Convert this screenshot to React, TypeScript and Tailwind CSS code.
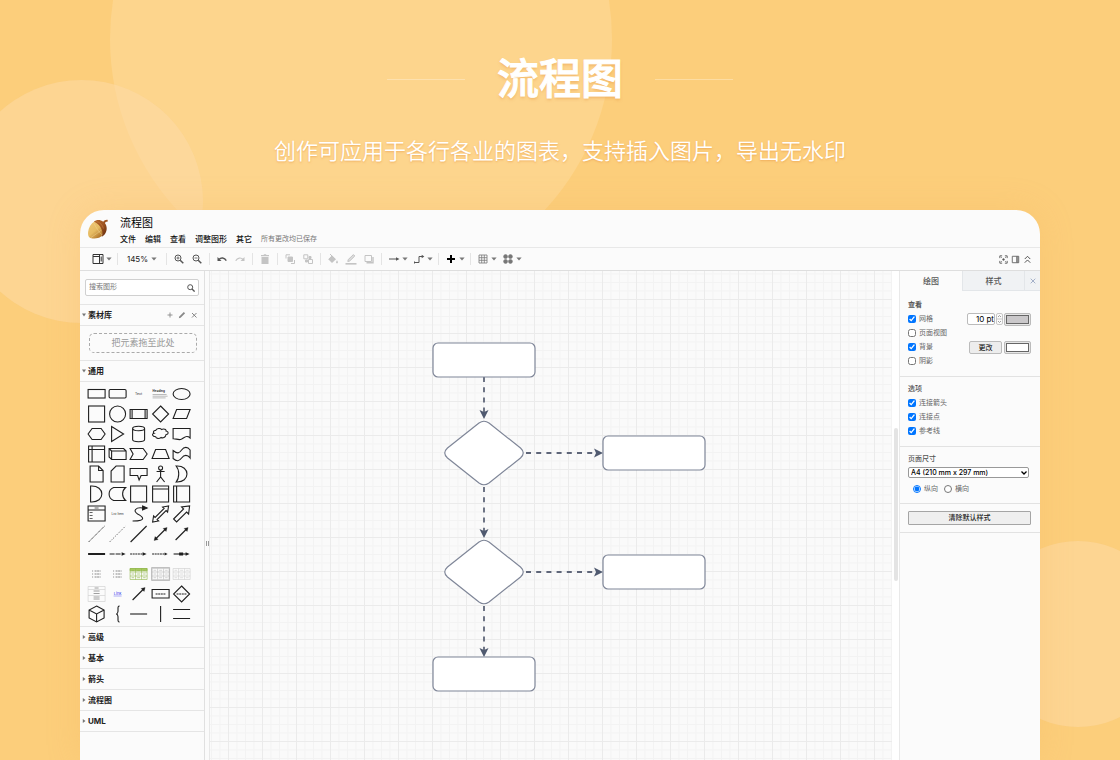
import type { ReactNode } from "react";

const INK = "#1f1f1f";
const MUTED = "#c4c4c4";
const STROKE = "#7f8698";
const EDGE = "#5f6679";

function Caret() {
  return (
    <svg viewBox="0 0 6 4" className="h-1 w-[6px] shrink-0" aria-hidden="true">
      <path d="M.4.5h5.2L3 3.5z" fill="#777" />
    </svg>
  );
}

interface ToolProps {
  readonly label: string;
  readonly children: ReactNode;
  readonly caret?: boolean;
  readonly color?: string;
}

function Tool({ label, children, caret, color = "#555" }: ToolProps) {
  return (
    <button
      type="button"
      aria-label={label}
      className={
        caret
          ? "flex h-4 w-[25px] items-center justify-center gap-[2px]"
          : "flex h-4 w-[18px] items-center justify-center"
      }
    >
      <svg
        viewBox="0 0 12 12"
        className="size-3 shrink-0"
        fill="none"
        stroke={color}
        aria-hidden="true"
      >
        {children}
      </svg>
      {caret && <Caret />}
    </button>
  );
}

function Divider() {
  return <span className="mx-[3px] h-3 w-px bg-[#e4e4e4]" />;
}

function Logo() {
  return (
    <svg viewBox="0 0 22 22" className="size-[22px]" aria-hidden="true">
      <defs>
        <linearGradient id="nut" x1="0" y1="0" x2=".8" y2="1">
          <stop offset="0" stopColor="#efc878" />
          <stop offset=".55" stopColor="#e6bb62" />
          <stop offset="1" stopColor="#a8691f" />
        </linearGradient>
        <linearGradient id="cap" x1="0" y1="0" x2="1" y2="1">
          <stop offset="0" stopColor="#b5692c" />
          <stop offset=".5" stopColor="#9c5220" />
          <stop offset="1" stopColor="#5a2509" />
        </linearGradient>
      </defs>
      <path
        d="M7.500 3.500C4 5.500 1.600 9.500 1.100 14c-.3 3 .4 5.400 2.400 5.900 3 .9 7.500.9 10.500-1.400 2.500-2 3-6 1-9.500-1.700-3-4.500-5-7.500-5.500z"
        fill="url(#nut)"
      />
      <path d="M7 5.500c2 4 4.500 8 8 11.500M14.500 12C11 14.500 7.500 17.500 4 19.500" stroke="#f6dc9a" strokeWidth=".6" fill="none" opacity=".7" />
      <path
        d="M6.800 3.600c2.700-2.100 6.600-2.100 9.400.2.900-1.400 2.500-2.200 4.300-2l.4 1.800c-1.300 0-2.400.5-3 1.500 2.300 3.200 2.500 7.400.2 10.700-.9 1.300-2.100 2.400-3.500 2.900 1.200-2.500 1.100-4.800-.1-7.500C13.200 8 10.600 5.300 6.800 3.600z"
        fill="url(#cap)"
      />
      <path d="M9.500 3.500c3.500.8 6 3.500 7 7" stroke="#d08a4a" strokeWidth=".7" fill="none" opacity=".7" />
    </svg>
  );
}

function Header() {
  return (
    <header className="flex h-[38px] shrink-0 border-b border-[#e8e8e8] pl-[7px]">
      <div className="pt-2">
        <Logo />
      </div>
      <div className="pt-[6px] pl-[11px]">
        <h2 className="text-[11px] leading-[14px] text-black">流程图</h2>
        <nav className="mt-[3px] flex items-center gap-[9px] text-[8px] leading-3 font-medium text-[#111]">
          {["文件", "编辑", "查看", "调整图形", "其它"].map((item) => (
            <button key={item} type="button">
              {item}
            </button>
          ))}
          <span className="text-[7px] font-normal text-[#777]">所有更改均已保存</span>
        </nav>
      </div>
    </header>
  );
}

function Toolbar() {
  return (
    <div className="flex h-[23px] shrink-0 items-center border-b border-[#dedede] pr-[7px] pl-[9px]">
      <Tool label="视图" caret color="#333">
        <path d="M1 1.500h10v9H1zM1 3.500h6.500M7.500 1.500v9M9.200 3.500v5" />
      </Tool>
      <Divider />
      <button
        type="button"
        className="flex w-[42px] items-center justify-center gap-[3px] text-[8px] text-[#222]"
      >
        145%
        <Caret />
      </button>
      <Divider />
      <Tool label="放大">
        <circle cx="5" cy="5" r="3" />
        <path d="M7.200 7.200 10.300 10.300" strokeWidth="1.500" />
        <path d="M3.500 5h3M5 3.500v3" strokeWidth=".8" />
      </Tool>
      <Tool label="缩小">
        <circle cx="5" cy="5" r="3" />
        <path d="M7.200 7.200 10.300 10.300" strokeWidth="1.500" />
        <path d="M3.500 5h3" strokeWidth=".8" />
      </Tool>
      <Divider />
      <Tool label="撤销">
        <path d="M3 6.500c2-2.300 5.500-2 7.300 1.200" strokeWidth="1.400" />
        <path d="M1.500 4v4h4z" fill="#555" stroke="none" />
      </Tool>
      <Tool label="重做" color={MUTED}>
        <path d="M9 6.500c-2-2.300-5.500-2-7.300 1.200" strokeWidth="1.200" />
        <path d="M10.500 4v4h-4z" fill={MUTED} stroke="none" />
      </Tool>
      <Divider />
      <Tool label="删除" color={MUTED}>
        <path d="M2.500 4h7v7h-7zM2 2h2.500l.6-.8h1.800l.6.8H10v1.200H2z" fill={MUTED} stroke="none" />
      </Tool>
      <Divider />
      <Tool label="移至最前" color={MUTED}>
        <path d="M4 4h4.500v4.500H4z" fill={MUTED} />
        <path d="M2 5.500V1.800h4M7 10.500h3.500V7" />
      </Tool>
      <Tool label="移至最后" color={MUTED}>
        <path d="M1.800 1.800h4v4h-4zM6.500 6.500h4v4h-4z" />
        <path d="M7 3.500h2v2h-2zM3.500 7h2v2h-2z" fill={MUTED} />
      </Tool>
      <Divider />
      <Tool label="填充颜色" color={MUTED}>
        <path d="m5 2.500 4 3.800L5 10 1.300 6.300z" fill={MUTED} stroke="none" />
        <path d="m3 1 3 3M2 6.300 5 3.200l3 3" />
        <path d="M10 7.200c1.600 2.200.9 3.100 0 3.100s-1.600-.9 0-3.100z" fill={MUTED} stroke="none" />
      </Tool>
      <Tool label="线条颜色" color={MUTED}>
        <path d="M.5 10.800h11" strokeWidth="1.600" />
        <path d="m2.800 8.500.4-1.900 5.200-5 1.400 1.400-5.100 5z" fill="#ddd" />
      </Tool>
      <Tool label="阴影" color={MUTED}>
        <path d="M2 2.500h6.500v6H2z" />
        <path d="M3.500 9.700h6.500V4" strokeWidth="1.400" />
      </Tool>
      <Divider />
      <Tool label="连接" caret>
        <path d="M1 6h7.500" />
        <path d="M8 4.200 11.500 6 8 7.800z" fill="#555" stroke="none" />
      </Tool>
      <Tool label="路径点" caret>
        <path d="M2 9.500h4v-6h3.500M1.500 8.500v2" />
        <path d="m8.700 1.700 2.600 1.800-2.600 1.800z" fill="#555" stroke="none" />
      </Tool>
      <Divider />
      <Tool label="插入" caret color="#000">
        <path d="M2 6h8M6 2v8" strokeWidth="2" />
      </Tool>
      <Divider />
      <Tool label="表格" caret color="#777">
        <path d="M2 2h8v8H2zM2 4.700h8M2 7.300h8M4.700 2v8M7.300 2v8" strokeWidth=".8" />
      </Tool>
      <Tool label="形状" caret color="#777">
        <rect x="1.800" y="1.800" width="3.500" height="3.500" rx="1.500" fill="#777" />
        <rect x="6.700" y="1.800" width="3.500" height="3.500" rx="1.500" fill="#777" />
        <rect x="1.800" y="6.700" width="3.500" height="3.500" rx="1.500" fill="#777" />
        <rect x="6.700" y="6.700" width="3.500" height="3.500" rx="1.500" fill="#777" />
      </Tool>
      <div className="ml-auto flex">
        <button type="button" aria-label="全屏" className="w-3">
          <svg viewBox="0 0 12 12" className="size-[11px]" fill="none" stroke="#555">
            <path d="M2 4.500V2h2.500M7.500 2H10v2.500M10 7.500V10H7.500M4.500 10H2V7.500" />
            <path d="m3.500 3.500 1 1M8.500 3.500l-1 1M3.500 8.500l1-1M8.500 8.500l-1-1" strokeWidth=".8" />
            <circle cx="6" cy="6" r=".8" fill="#555" />
          </svg>
        </button>
        <button type="button" aria-label="格式" className="w-3">
          <svg viewBox="0 0 12 12" className="size-[11px]" fill="none" stroke="#666">
            <path d="M2.500 2.500h7v7h-7zM7.300 2.500v7M8.500 2.500v7" />
          </svg>
        </button>
        <button type="button" aria-label="收起" className="w-[11px]">
          <svg viewBox="0 0 12 12" className="size-[11px]" fill="none" stroke="#444">
            <path d="m3 5.500 3-3 3 3M3 9.500l3-3 3 3" />
          </svg>
        </button>
      </div>
    </div>
  );
}

function TinyTable({ line, head }: { readonly line: string; readonly head?: string }) {
  return (
    <g stroke={line} strokeWidth=".6">
      {head && <path d="M-8.500-5.500h17v2.200h-17z" fill={head} />}
      <path d="M-8.500-5.500h17v11h-17zM-8.500-2h17M-8.500 2h17M-3-5.500v11M3-5.500v11" />
      <path d="M-7-3.700h2.500M-1.500-3.700h3M4.500-3.700h2.500M-7 0h2.500M-1.500 0h3M4.500 0h2.500M-7 3.700h2.500M-1.500 3.700h3M4.500 3.700h2.500" />
    </g>
  );
}

function TinyText({ children, bold, y = 1, size = 3.5, fill = "#333" }: {
  readonly children: string;
  readonly bold?: boolean;
  readonly y?: number;
  readonly size?: number;
  readonly fill?: string;
}) {
  return (
    <text x="0" y={y} fontSize={size} fontWeight={bold ? 700 : 400} textAnchor="middle" fill={fill} stroke="none">
      {children}
    </text>
  );
}

const list = (
  <path
    d="M-4.500-3h1M-2-3h6M-4.500 0h1M-2 0h6M-4.500 3h1M-2 3h6"
    stroke="#888"
    strokeWidth="1"
    strokeDasharray="2 .5"
  />
);

// drawn around the centre of a 20 x 20 cell
const SHAPES: readonly ReactNode[] = [
  <rect x="-8.500" y="-4.500" width="17" height="8.500" />,
  <rect x="-8.500" y="-4.500" width="17" height="8.500" rx="1.200" />,
  <TinyText>Text</TinyText>,
  <>
    <text x="-8" y="-2" fontSize="3" fontWeight="700" fill="#333" stroke="none">Heading</text>
    <path d="M-8 .5H6M-8 2.200H7M-8 3.900H5" stroke="#aaa" strokeWidth=".8" />
  </>,
  <ellipse rx="8.500" ry="5.500" />,
  <rect x="-8" y="-8" width="16" height="16" />,
  <circle r="8" />,
  <path d="M-8.500-4.500h17v9h-17zM-6.500-4.500v9M6.500-4.500v9" />,
  <path d="m0-8 8 8-8 8-8-8z" />,
  <path d="M-5-4.500H8.500L5 4.500H-8.500z" />,
  <path d="M-4.500-5.500h9L8.500 0l-4 5.500h-9L-8.500 0z" />,
  <path d="M-6-7.500 6 0-6 7.500z" />,
  <path d="M-6-5.500v11c0 3 12 3 12 0v-11c0-3-12-3-12 0 0 3 12 3 12 0" />,
  <path d="M-5-3.500c1-2.500 5-2.500 6-1 2-1 5 0 4.500 1.500 3 .8 2.500 3.200 0 3.500C5 3.500 2 4.500.5 3.500c-2 1.500-5 1.200-5.500-.8-3.500 0-4-3-1.500-3.400C-8-1.500-7-3.800-5-3.500z" />,
  <path d="M-8.500-5.500h17V4C4 0 2 5-1 5.500c-3 .5-5-1-7.500-.8z" />,
  <path d="M-8-8H8V8H-8zM-8-4.500H8M-4.500-8V8" />,
  <path d="M-8.500-5.500H6L8.500-3v8.500H-6L-8.500 3zM-8.500-5.500-6-3M-6 5.500V-3H8.500" />,
  <path d="M-8.500-5.500h13L8.500 0l-4 5.500h-13L-5.500 0z" />,
  <path d="M-5-4.500H5l3.500 9h-17z" />,
  <path d="M-8.500-3.500C-4 0-2.500-.5 0-4c2.500-3.500 6-3.500 8.500 0v8C6 .5 2.500.5 0 4c-2.500 3.500-5 3.500-8.500.5z" />,
  <path d="M-6.500-8H2l4.500 4.500V8h-13zM2-8v4.500h4.500" />,
  <path d="M-1.500-8h8V8h-13V-3z" />,
  <path d="M-8.500-5.500h17v7H2.500L.5 6-1 1.500h-7.500z" />,
  <>
    <circle cy="-6" r="2" />
    <path d="M0-4v7M-4-2.500h8M-4 8l4-5 4 5" />
  </>,
  <path d="M-5.500-8C9-9 9 9-5.500 8-2 4-2-4-5.500-8z" />,
  <path d="M-6-8C9-9 9 9-6 8z" />,
  <path d="M-4-6.500h12C4-3 4 3 8 6.500H-4C-10 4-10-4-4-6.500z" />,
  <rect x="-8" y="-8" width="16" height="16" />,
  <path d="M-8-8H8V8H-8zM-8-5H8" />,
  <path d="M-8-8H8V8H-8zM-5-8V8" />,
  <>
    <path d="M-8.500-8h17V7h-17zM-8.500-4h17" />
    <path d="M-2-6h4M-7-1.500h3M-7 1.500h3M-7 4.500h3" strokeWidth=".7" />
  </>,
  <TinyText size={3}>List Item</TinyText>,
  <>
    <path d="M-6 7C10 7 3 2-1 0c-5-3-2-7 5-6" />
    <path d="m4-8 4.500 2L4-4z" fill={INK} />
  </>,
  <path d="m-8 8 1-6 1.500 1.500L3.500-5.500 2-7l6-1-1 6-1.500-1.500-9 9L-2 7z" />,
  <path d="m-8 5 10-10-2-2 8-1-1 8-2-2L-5 8z" />,
  <path d="M-8 8 8-8" strokeDasharray="1.500 .5" strokeWidth=".8" />,
  <path d="M-8 8 8-8" strokeDasharray="1 1.500" strokeWidth=".8" />,
  <path d="M-8 8 8-8" />,
  <>
    <path d="M-5.500 5.500 5.500-5.500" />
    <path d="m-6.500 6.500 1-4 3 3zM6.500-6.500l-4 1 3 3z" fill={INK} strokeWidth=".3" />
  </>,
  <>
    <path d="M-6 6 5.500-5.500" />
    <path d="m6.500-6.500-4 1 3 3z" fill={INK} strokeWidth=".3" />
  </>,
  <path d="M-8.500 0h17" strokeWidth="2" />,
  <>
    <path d="M-8 0h12" strokeDasharray="5 1" />
    <path d="M4-1.800 8 0 4 1.800z" fill={INK} stroke="none" />
  </>,
  <>
    <path d="M-8.500 0H5" strokeDasharray="2 .6" />
    <path d="M4-1.800 8 0 4 1.800z" fill={INK} stroke="none" />
  </>,
  <>
    <path d="M-8.500 0H5" strokeDasharray="2 .6" />
    <path d="M4-1.500 7 0 4 1.500z" fill={INK} stroke="none" />
  </>,
  <>
    <path d="M-8 0H5" />
    <path d="M-2.500-1.500h4v3h-4zM4-1.800 8 0 4 1.800z" fill={INK} stroke="none" />
  </>,
  list,
  list,
  <TinyTable line="#8fb548" head="#a9cc61" />,
  <g>
    <TinyTable line="#bbb" />
    <path d="M-9-6.500H9v13H-9z" stroke="#999" strokeWidth=".6" />
  </g>,
  <TinyTable line="#ccc" />,
  <g stroke="#ccc" strokeWidth=".6">
    <path d="M-8.500-7.500h17v15h-17zM-8.500-4.500h17M-8.500 1.500h17" />
    <path d="M-2-6h4M-3-3h6M-3-.5h6M-3 3h6M-3 5h6" stroke="#888" strokeWidth=".8" />
  </g>,
  <g>
    <TinyText fill="#33e" size={4}>Link</TinyText>
    <path d="M-4 2h8" stroke="#33e" strokeWidth=".4" />
  </g>,
  <>
    <path d="M-6 6 5.500-5.500" />
    <path d="m6.500-6.500-4 1 3 3z" fill={INK} strokeWidth=".3" />
  </>,
  <>
    <path d="M-8.500-4.500h17v8.500h-17z" />
    <path d="M-5 0H5" strokeDasharray="2 .6" strokeWidth="1.200" />
  </>,
  <>
    <path d="m0-8 8 8-8 8-8-8z" />
    <path d="M-5 0H5" strokeDasharray="2 .6" strokeWidth="1" />
  </>,
  <path d="m0-8 7.500 4v8L0 8l-7.500-4v-8zM-7.500-4 0 0l7.500-4M0 0v8" />,
  <path d="M2-8C-.5-8 .8-5 .3-2 0-.5-.5 0-1.500 0-.5 0 0 .5.300 2 .8 5-.5 8 2 8" />,
  <path d="M-8.500 0h17" />,
  <path d="M0-8V8" />,
  <path d="M-8.500-4.500h17M-8.500 4.500h17" />,
];

function SectionHead({ title, open, children }: {
  readonly title: string;
  readonly open?: boolean;
  readonly children?: ReactNode;
}) {
  return (
    <div className="flex h-[21px] items-center border-t border-[#e5e5e5] pr-[6px] pl-[2px]">
      <button type="button" className="flex items-center gap-[2px] text-[8px] font-bold text-[#222]">
        <svg viewBox="0 0 4 4" className="size-1" aria-hidden="true">
          <path d={open ? "M0 .5h4L2 3.500z" : "M.8 0 3.500 2 .8 4z"} fill="#777" />
        </svg>
        {title}
      </button>
      {children}
    </div>
  );
}

function Sidebar() {
  return (
    <aside className="w-[125px] shrink-0 border-r border-[#e0e0e0]">
      <div className="px-[5px] py-2">
        <div className="flex h-[17px] items-center rounded-[2px] border border-[#d0d0d0] bg-white px-[3px]">
          <input
            aria-label="搜索图形"
            placeholder="搜索图形"
            className="min-w-0 flex-1 text-[7px] outline-none placeholder:text-[#777]"
          />
          <svg viewBox="0 0 8 8" className="size-2" fill="none" stroke="#555" aria-hidden="true">
            <circle cx="3.200" cy="3.200" r="2.500" />
            <path d="m5 5 2.600 2.600" strokeWidth="1.300" />
          </svg>
        </div>
      </div>
      <SectionHead title="素材库" open>
        <div className="ml-auto flex gap-1">
          <button type="button" aria-label="添加">
            <svg viewBox="0 0 8 8" className="size-2" stroke="#888" strokeWidth=".9">
              <path d="M1.500 4h5M4 1.500v5" />
            </svg>
          </button>
          <button type="button" aria-label="编辑素材库">
            <svg viewBox="0 0 8 8" className="size-2" fill="#888">
              <path d="m.8 7.200.5-1.800L5.800.9l1.300 1.300-4.500 4.500z" />
            </svg>
          </button>
          <button type="button" aria-label="关闭素材库">
            <svg viewBox="0 0 8 8" className="size-2" stroke="#777" strokeWidth=".9">
              <path d="m2 2 4.500 4.500M6.500 2 2 6.500" />
            </svg>
          </button>
        </div>
      </SectionHead>
      <div className="border-t border-[#e5e5e5] pt-[7px] pr-[7px] pb-[7px] pl-[9px]">
        <div className="flex h-5 items-center justify-center rounded-[5px] border border-dashed border-[#aaa] text-[9px] text-[#999]">
          把元素拖至此处
        </div>
      </div>
      <SectionHead title="通用" open />
      <div className="border-t border-[#e5e5e5] px-[6px] py-[2px]">
        <div className="grid w-[106px] grid-cols-5">
          {SHAPES.map((shape, index) => (
            <svg
              key={index}
              viewBox="-10 -10 20 20"
              className="h-5 w-full overflow-visible"
              fill="none"
              stroke={INK}
              strokeWidth="1.100"
              aria-hidden="true"
            >
              {shape}
            </svg>
          ))}
        </div>
      </div>
      {["高级", "基本", "箭头", "流程图", "UML"].map((title) => (
        <SectionHead key={title} title={title} />
      ))}
      <div className="border-t border-[#e5e5e5]" />
    </aside>
  );
}

function Box({ x, y }: { readonly x: number; readonly y: number }) {
  return <rect x={x} y={y} width="102" height="34" rx="5" fill="#fff" stroke={STROKE} strokeWidth="1.200" />;
}

function Decision({ y }: { readonly y: number }) {
  return (
    <path
      transform={`translate(274 ${y})`}
      d="M-5-30Q0-33.500 5-30L36.500-5Q42 0 36.500 5L5 30Q0 33.500-5 30L-36.500 5Q-42 0-36.500-5z"
      fill="#fff"
      stroke={STROKE}
      strokeWidth="1.200"
    />
  );
}

function Connector({ x, y, length, down }: {
  readonly x: number;
  readonly y: number;
  readonly length: number;
  readonly down?: boolean;
}) {
  return (
    <g transform={`translate(${x} ${y}) rotate(${down ? 90 : 0})`}>
      <path d={`M0 0H${length - 6}`} stroke={EDGE} strokeWidth="1.800" strokeDasharray="5 5.200" />
      <path transform={`translate(${length} 0)`} d="M0 0-9-4.500-7 0-9 4.500z" fill="#505a70" />
    </g>
  );
}

function Canvas() {
  return (
    <main className="min-w-0 flex-1 bg-[#fafafa]">
      <svg className="block h-full w-full" role="img" aria-label="流程图画布">
        <defs>
          <pattern id="grid" x="18" y="28" width="34" height="34" patternUnits="userSpaceOnUse">
            <path
              d="M9 0v34M17.500 0v34M26 0v34M0 9h34M0 17.500h34M0 26h34"
              stroke="#f3f3f3"
              fill="none"
            />
            <path d="M.5 0v34M0 .5h34" stroke="#ebebeb" fill="none" />
          </pattern>
        </defs>
        <rect width="100%" height="100%" fill="url(#grid)" />
        <Connector x={274} y={106} length={42} down />
        <Connector x={274} y={216} length={51} down />
        <Connector x={274} y={335} length={51} down />
        <Connector x={316} y={182} length={77} />
        <Connector x={316} y={301} length={77} />
        <Box x={223} y={72} />
        <Decision y={182} />
        <Box x={393} y={165} />
        <Decision y={301} />
        <Box x={393} y={284} />
        <Box x={223} y={386} />
      </svg>
    </main>
  );
}

function Check({ label, checked }: { readonly label: string; readonly checked?: boolean }) {
  return (
    <label className="flex h-[14px] items-center gap-[3px] text-[7px] text-[#666]">
      <input type="checkbox" defaultChecked={checked} className="size-2" />
      {label}
    </label>
  );
}

function Swatch({ label, dark }: { readonly label: string; readonly dark?: boolean }) {
  return (
    <button
      type="button"
      aria-label={label}
      className="h-[13px] w-[27px] rounded-[2px] border border-[#bbb] bg-[#e6e6e6] p-px"
    >
      <span
        className={
          dark
            ? "block h-full border border-[#666] bg-[#cac8ca]"
            : "block h-full border border-[#666] bg-white"
        }
      />
    </button>
  );
}

function FormatPanel() {
  return (
    <aside className="w-[140px] shrink-0 text-[7px] text-[#555]">
      <div className="flex h-5 font-medium">
        <button type="button" className="w-[62px] text-[8px]">
          绘图
        </button>
        <button type="button" className="flex-1 border-b border-l border-[#e3e6e9] bg-[#f0f2f4] text-[8px]">
          样式
        </button>
        <button
          type="button"
          aria-label="关闭"
          className="flex w-4 items-center justify-center border-b border-l border-[#e3e6e9] bg-[#f0f2f4]"
        >
          <svg viewBox="0 0 6 6" className="size-[6px]" stroke="#a3b0c8">
            <path d="m.7.7 4.600 4.600M5.300.7.7 5.300" />
          </svg>
        </button>
      </div>
      <section className="border-b border-[#e2e2e2] pt-[6px] pr-[9px] pb-2 pl-2">
        <h3 className="h-[15px] leading-[15px] font-bold">查看</h3>
        <div className="flex justify-between">
          <Check label="网格" checked />
          <div className="flex items-center gap-px">
            <input
              aria-label="网格大小"
              defaultValue="10 pt"
              className="h-3 w-[28px] rounded-[2px] border border-[#bbb] bg-white text-right text-[8px] text-black"
            />
            <button type="button" aria-label="调整网格大小" className="w-[7px]">
              <svg viewBox="0 0 7 12" className="h-3 w-[7px]" fill="none" stroke="#888" strokeWidth=".8">
                <rect x=".5" y=".5" width="6" height="11" rx="1.500" stroke="#bbb" />
                <path d="M.5 6h6" stroke="#bbb" />
                <path d="M2 4l1.500-1.500L5 4M2 8l1.500 1.500L5 8" />
              </svg>
            </button>
            <Swatch label="网格颜色" dark />
          </div>
        </div>
        <Check label="页面视图" />
        <div className="flex justify-between">
          <Check label="背景" checked />
          <div className="flex items-center gap-[2px]">
            <button
              type="button"
              className="h-[13px] w-[33px] rounded-[2px] border border-[#bbb] bg-[#ededed] text-[7px] leading-[11px] text-black"
            >
              更改
            </button>
            <Swatch label="背景颜色" />
          </div>
        </div>
        <Check label="阴影" />
      </section>
      <section className="border-b border-[#e2e2e2] px-2 pt-1 pb-2">
        <h3 className="h-[15px] leading-[15px] font-medium">选项</h3>
        <Check label="连接箭头" checked />
        <Check label="连接点" checked />
        <Check label="参考线" checked />
      </section>
      <section className="border-b border-[#e2e2e2] px-2 pt-1 pb-[7px]">
        <h3 className="h-4 leading-4 font-medium">页面尺寸</h3>
        <div className="relative mr-[3px]">
          <select
            aria-label="页面尺寸"
            className="block h-[11px] w-full appearance-none rounded-[2px] border border-[#999] bg-white px-[2px] text-[7px] leading-[9px] font-medium text-black"
          >
            <option>A4 (210 mm x 297 mm)</option>
          </select>
          <svg
            viewBox="0 0 6 4"
            className="pointer-events-none absolute top-[4px] right-[2px] h-1 w-[6px]"
            fill="none"
            stroke="#000"
            strokeWidth="1.300"
          >
            <path d="m.5.5 2.500 2.500L5.500.5" />
          </svg>
        </div>
        <div className="mt-1 flex h-[14px] items-center gap-[6px] pl-[5px] text-[#666]">
          <label className="flex items-center gap-[3px]">
            <input type="radio" name="orientation" defaultChecked className="size-2" />
            纵向
          </label>
          <label className="flex items-center gap-[3px]">
            <input type="radio" name="orientation" className="size-2" />
            横向
          </label>
        </div>
      </section>
      <section className="border-b border-[#e2e2e2] pt-[7px] pr-[9px] pb-[7px] pl-2">
        <button
          type="button"
          className="block h-[14px] w-full rounded-[1px] border border-[#a5a5a5] bg-[#efefef] text-[7px] leading-3 font-medium text-[#222]"
        >
          清除默认样式
        </button>
      </section>
    </aside>
  );
}

export default function App() {
  return (
    <div className="relative flex h-screen flex-col overflow-hidden bg-[#fcce7b] font-[Inter,'Noto_Sans_CJK_SC',sans-serif]">
      <div className="absolute -top-[212px] left-[110px] size-[502px] rounded-full bg-[#fdd58d]" />
      <div className="absolute top-[80px] -left-[40px] size-[243px] rounded-full bg-[#fddcaa]/50" />
      <div className="absolute top-[541px] -right-[51px] size-[186px] rounded-full bg-[#fddcaa]/50" />

      <div className="relative flex h-[210px] shrink-0 flex-col items-center pt-12 text-white">
        <div className="flex items-center gap-8">
          <span className="h-px w-[78px] bg-white/30" />
          <h1 className="text-[42px] leading-[62px] font-medium [-webkit-text-stroke:1px_white] text-shadow-[0_2px_3px_#e8964480]">
            流程图
          </h1>
          <span className="h-px w-[78px] bg-white/30" />
        </div>
        <p className="mt-[25px] text-[22px] leading-8 font-[350] text-shadow-[0_1px_2px_#e8964499]">
          创作可应用于各行各业的图表，支持插入图片，导出无水印
        </p>
      </div>

      <div className="relative mx-20 flex min-h-0 flex-1 flex-col overflow-hidden rounded-t-[24px] bg-[#fbfbfb] shadow-[0_0_32px_#f5b45a40]">
        <Header />
        <Toolbar />
        <div className="flex min-h-0 flex-1">
          <Sidebar />
          <div className="flex w-[5px] shrink-0 justify-center border-r border-[#e8e8e8] pt-[270px]">
            <span className="h-[5px] w-[3px] border-x border-[#999]" />
          </div>
          <Canvas />
          <div className="w-2 shrink-0 border-r border-[#e9e9e9] bg-white pt-[157px] pl-[2px]">
            <div className="h-[153px] w-1 rounded-full bg-[#e4e4e4]" />
          </div>
          <FormatPanel />
        </div>
      </div>
    </div>
  );
}
